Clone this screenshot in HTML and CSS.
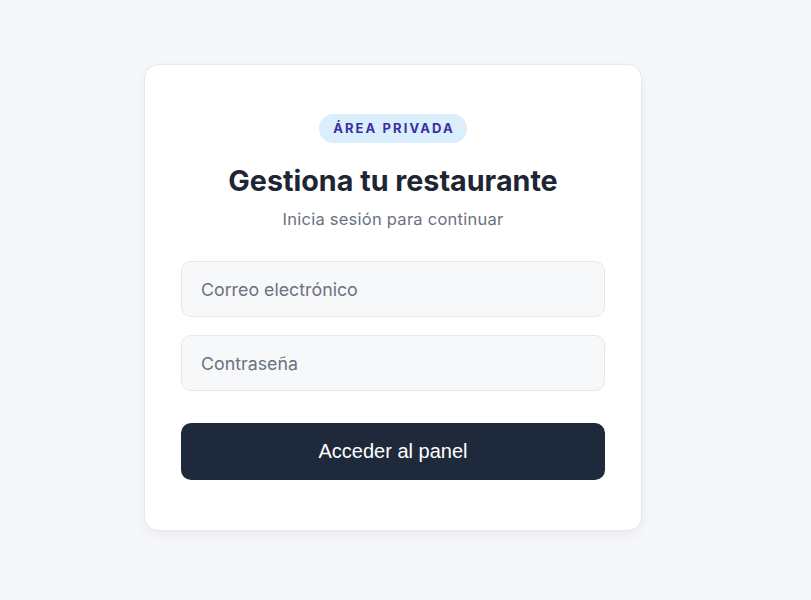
FILE: index.html
```
<!DOCTYPE html>
<html lang="es">
<head>
<meta charset="utf-8">
<title>Área privada</title>
<link rel="stylesheet" href="styles.css">
</head>
<body>
<main class="page">
  <section class="card">
    <span class="badge">ÁREA PRIVADA</span>
    <h1 class="title">Gestiona tu restaurante</h1>
    <p class="subtitle">Inicia sesión para continuar</p>
    <form class="form">
      <input class="field" type="email" placeholder="Correo electrónico">
      <input class="field" type="password" placeholder="Contraseña">
      <button class="submit" type="button">Acceder al panel</button>
    </form>
  </section>
</main>
</body>
</html>
```
FILE: styles.css
```
* { box-sizing: border-box; }
html, body { margin: 0; padding: 0; }
body {
  background: #f6f7f9;
  font-family: "Inter", "Noto Sans", sans-serif;
  color: #1e293b;
  height: 600px;
  overflow: hidden;
}
.page {
  display: flex;
  justify-content: center;
  padding: 64px 25px 0 0;
}
.card {
  width: 498px;
  background: #ffffff;
  border: 1px solid #e5e7eb;
  border-radius: 14px;
  box-shadow: 0 4px 12px rgba(15, 23, 42, 0.05);
  padding: 49px 36px 50px;
  display: flex;
  flex-direction: column;
  align-items: center;
}
.badge {
  display: inline-block;
  background: #dbeefd;
  color: #3730a3;
  font-weight: 700;
  font-size: 13px;
  letter-spacing: 2.1px;
  line-height: 29px;
  height: 29px;
  padding: 0 12px 0 14px;
  border-radius: 15px;
}
.title {
  margin: 20px 0 0;
  font-size: 28.7px;
  font-weight: 700;
  line-height: 36px;
  color: #1e2533;
}
.subtitle {
  margin: 9px 0 0;
  font-size: 16.5px;
  letter-spacing: 0.25px;
  line-height: 22px;
  color: #6b7280;
}
.form {
  width: 100%;
  margin-top: 31px;
  display: flex;
  flex-direction: column;
}
.field {
  width: 100%;
  height: 56px;
  background: #f7f8fa;
  border: 1px solid #e5e7eb;
  border-radius: 10px;
  padding: 0 19px;
  font-family: "Inter", "Noto Sans", sans-serif;
  font-size: 17.8px;
  color: #1e293b;
  outline: none;
}
.field + .field { margin-top: 18px; }
.field::placeholder { color: #6b7280; }
.submit {
  margin-top: 32px;
  width: 100%;
  height: 57px;
  background: #1e293b;
  color: #ffffff;
  border: none;
  border-radius: 10px;
  font-family: "Liberation Sans", Arial, sans-serif;
  font-size: 20px;
}
```
